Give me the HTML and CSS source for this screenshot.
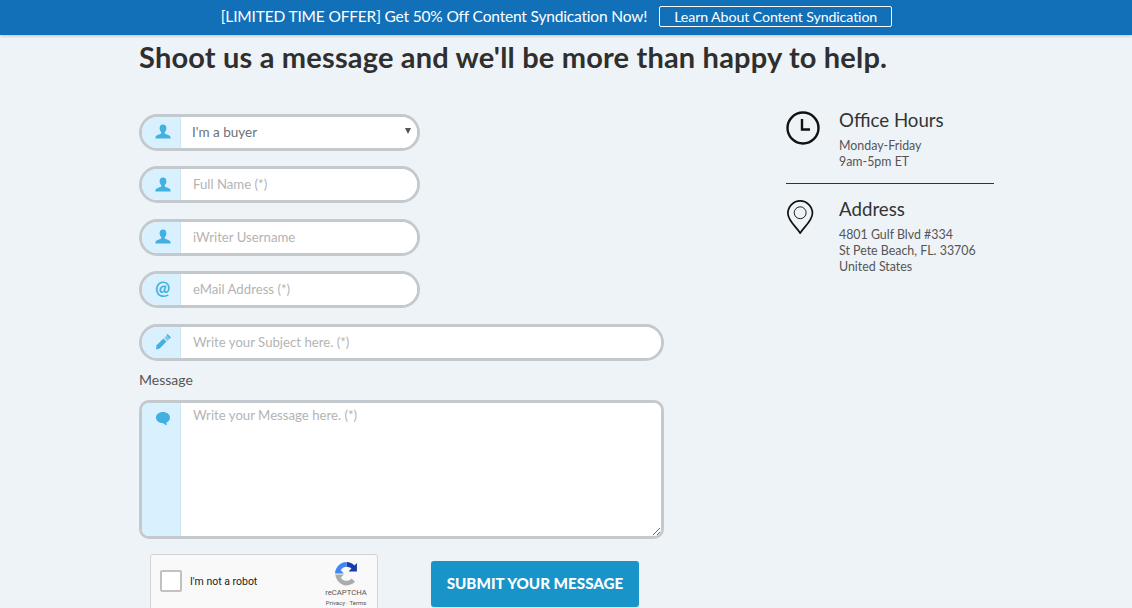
FILE: index.html
```html
<!DOCTYPE html>
<html lang="en">
<head>
<meta charset="utf-8">
<title>Contact</title>
<link rel="stylesheet" href="styles.css">
</head>
<body>
<header class="banner">
  <span class="banner-text">[LIMITED TIME OFFER] Get 50% Off Content Syndication Now!</span>
  <a class="banner-btn" href="#">Learn About Content Syndication</a>
</header>
<main class="page">
  <h1 class="title">Shoot us a message and we'll be more than happy to help.</h1>
  <div class="columns">
    <form class="form">
      <div class="field short has-caret">
        <span class="addon"><svg class="ico" viewBox="0 0 16 16"><path d="M8 0.5c2.2 0 3.4 1.6 3.4 3.8 0 1.6-.7 3-1.5 3.8-.3.4-.3 1.300.2 1.600 1.200.7 5 1.400 5.400 3.300.1.600.1 1.500.1 1.500H.4s0-.900.1-1.500c.4-1.900 4.200-2.600 5.400-3.300.5-.3.5-1.200.2-1.600-.8-.8-1.500-2.200-1.500-3.800C4.600 2.100 5.800.5 8 .5z"/></svg></span>
        <select class="control select"><option>I'm a buyer</option></select>
      </div>
      <div class="field short">
        <span class="addon"><svg class="ico" viewBox="0 0 16 16"><path d="M8 0.5c2.2 0 3.4 1.6 3.4 3.8 0 1.6-.7 3-1.5 3.8-.3.4-.3 1.300.2 1.600 1.200.7 5 1.400 5.400 3.300.1.600.1 1.500.1 1.500H.4s0-.900.1-1.500c.4-1.900 4.200-2.600 5.400-3.300.5-.3.5-1.200.2-1.600-.8-.8-1.500-2.200-1.500-3.800C4.600 2.100 5.800.5 8 .5z"/></svg></span>
        <input class="control" type="text" placeholder="Full Name (*)">
      </div>
      <div class="field short">
        <span class="addon"><svg class="ico" viewBox="0 0 16 16"><path d="M8 0.5c2.2 0 3.4 1.6 3.4 3.8 0 1.6-.7 3-1.5 3.8-.3.4-.3 1.300.2 1.600 1.200.7 5 1.400 5.400 3.300.1.600.1 1.500.1 1.500H.4s0-.900.1-1.500c.4-1.900 4.200-2.600 5.400-3.300.5-.3.5-1.200.2-1.600-.8-.8-1.500-2.200-1.500-3.800C4.600 2.100 5.800.5 8 .5z"/></svg></span>
        <input class="control" type="text" placeholder="iWriter Username">
      </div>
      <div class="field short">
        <span class="addon at">@</span>
        <input class="control" type="text" placeholder="eMail Address (*)">
      </div>
      <div class="field">
        <span class="addon"><svg class="ico" viewBox="0 0 16 16"><path d="M1 15.500l.6-4.200L8.400 4.500l3.100 3.100-6.800 6.800z"/><path d="M9.300 3.700l2.700-2.400 3 3-2.500 2.600z" opacity=".6"/><path d="M11.500 1l1-1 3.500 3.500-1 1z"/></svg></span>
        <input class="control" type="text" placeholder="Write your Subject here. (*)">
      </div>
      <label class="label">Message</label>
      <div class="field area">
        <span class="addon top"><svg class="ico chat" viewBox="0 0 16 16"><path d="M8 1c3.900 0 7 2.400 7 5.600 0 2.400-1.500 4.300-3.700 5.100.1 1.100.9 2.500.9 2.500s-2.700-.6-4.100-2C3.900 12.200 1 9.800 1 6.600 1 3.400 4.100 1 8 1z"/></svg></span>
        <textarea class="control textarea" placeholder="Write your Message here. (*)"></textarea>
      </div>
      <div class="actions">
        <div class="captcha">
          <span class="check"></span>
          <span class="robot">I'm not a robot</span>
          <div class="brand">
            <svg class="logo" viewBox="0 0 24 24">
              <path fill="#1c3aa9" d="M12 1c3 0 5.700 1.300 7.600 3.400L22 2v8h-8l2.700-2.800C15.700 6.200 14 5.500 12 5.500z"/>
              <path fill="#4285f4" d="M12 1v4.500c-2.400 0-4.400 1.300-5.500 3.300L9.500 12H1.200C1 11.700 1 11.300 1 11 2 5.400 6.500 1 12 1z"/>
              <path fill="#ababab" d="M1.200 13h8.300l-3 3c1.100 1.700 3.200 3 5.500 3 2 0 3.700-.9 4.900-2.300l3.300 3.300C18.300 22 15.300 23.500 12 23.500 6.500 23.500 2 19 1.200 13z"/>
            </svg>
            <span class="brand-name">reCAPTCHA</span>
            <span class="brand-links">Privacy · Terms</span>
          </div>
        </div>
        <button class="submit" type="button">SUBMIT YOUR MESSAGE</button>
      </div>
    </form>
    <aside class="info">
      <section class="info-block">
        <svg class="info-ico" viewBox="0 0 34 34" fill="none" stroke="#111" stroke-width="2.400"><circle cx="17" cy="17" r="15.500"/><path d="M16 8v10.500h8"/></svg>
        <div>
          <h2 class="info-title">Office Hours</h2>
          <p class="info-text">Monday-Friday<br>9am-5pm ET</p>
        </div>
      </section>
      <hr class="rule">
      <section class="info-block">
        <svg class="info-ico" viewBox="0 0 34 36" fill="none" stroke="#111" stroke-width="1.800"><path d="M14 35C10.500 29 1 22 1 14a13 13 0 0 1 26 0c0 8-9.500 15-13 21z"/><circle cx="14" cy="13.500" r="6.300" stroke-width="1"/></svg>
        <div>
          <h2 class="info-title">Address</h2>
          <p class="info-text">4801 Gulf Blvd #334<br>St Pete Beach, FL. 33706<br>United States</p>
        </div>
      </section>
    </aside>
  </div>
</main>
</body>
</html>
```
FILE: styles.css
```css
* { box-sizing: border-box; }
html, body { margin: 0; height: 608px; overflow: hidden; }
body { background: #eef3f7; font-family: "Lato", "Liberation Sans", sans-serif; color: #333; }

.banner {
  height: 35px;
  background: #1270b8;
  box-shadow: 0 1px 3px rgba(0,0,0,.2);
  display: flex;
  align-items: center;
  justify-content: center;
  padding: 0 19px 3px 0;
  color: #fff;
  font-size: 15.5px;
}
.banner-text { letter-spacing: -0.17px; }
.banner-btn {
  margin-left: 12px;
  width: 233px;
  height: 21px;
  border: 1px solid #fff;
  border-radius: 2px;
  color: #fff;
  text-decoration: none;
  font-size: 14.200px;
  letter-spacing: -0.1px;
  display: flex;
  align-items: center;
  justify-content: center;
}

.page { padding-left: 139px; }
.title {
  margin: 4px 0 0;
  height: 36px;
  font-size: 29px;
  line-height: 36px;
  font-weight: 700;
  letter-spacing: 0.18px;
  color: #2f2f2f;
  white-space: nowrap;
}
.columns { display: flex; margin-top: 38.750px; }
.form { width: 525px; display: flex; flex-direction: column; }
.info { width: 208px; margin-left: 122px; margin-top: -5.750px; }

.field {
  position: relative;
  display: flex;
  height: 37px;
  margin-bottom: 15.5px;
  border: 3px solid #c3c9cc;
  border-radius: 19px;
  background: #fff;
  overflow: hidden;
}
.field.short { width: 281px; }
.field.area { height: 139.500px; border-radius: 10px; margin-bottom: 14.500px; }
.has-caret::after {
  content: "";
  position: absolute;
  right: 6px;
  top: 11px;
  border-style: solid;
  border-width: 6px 3px 0;
  border-color: #555 transparent transparent;
}
.addon {
  width: 39px;
  flex: none;
  background: #d9f0fe;
  border-right: 1px solid #cfe6f3;
  display: flex;
  align-items: center;
  justify-content: center;
  padding-left: 3px;
  color: #42b0e0;
}
.addon.top { align-items: flex-start; padding-top: 8px; }
.at { font-size: 18px; padding-bottom: 3px; font-weight: 700; }
.ico { width: 16px; height: 16px; fill: #42b0e0; }

.control {
  flex: 1;
  min-width: 0;
  border: 0;
  outline: 0;
  background: #fff;
  padding: 0 0 1px 12px;
  font-family: inherit;
  font-size: 13.5px;
  color: #6b7278;
}
.control::placeholder { color: #b4b4b4; opacity: 1; font-size: 13.200px; }
.select { appearance: none; padding-left: 11px; }
.textarea { resize: vertical; padding-top: 4px; height: 100%; }

.label {
  font-size: 14px;
  line-height: 16px;
  color: #555;
  margin: -4px 0 11.500px;
}

.actions { display: flex; align-items: flex-start; }
.captcha {
  flex: none;
  margin-left: 11px;
  width: 228px;
  height: 74px;
  background: #f9f9f9;
  border: 1px solid #d3d3d3;
  border-radius: 3px;
  display: flex;
  align-items: flex-start;
  padding: 15px 0 0 9px;
  font-family: "Roboto", sans-serif;
}
.check {
  width: 22px;
  height: 22px;
  background: #fff;
  border: 2px solid #c1c1c1;
  border-radius: 2px;
  flex: none;
}
.robot { margin-left: 8px; font-size: 10.500px; line-height: 24px; color: #222; }
.brand {
  margin-left: auto;
  width: 62px;
  margin-top: -9px;
  display: flex;
  flex-direction: column;
  align-items: center;
  color: #555;
}
.logo { width: 25px; height: 25px; }
.brand-name { font-size: 7.700px; line-height: 11px; margin-top: 1px; }
.brand-links { font-size: 6px; line-height: 10px; }
.submit {
  margin: 7px 0 0 53px;
  width: 208px;
  height: 46px;
  background: #1894c8;
  border: 0;
  border-radius: 3px;
  color: #fff;
  padding: 0 0 1px;
  font-family: inherit;
  font-size: 15.200px;
  font-weight: 900;
}

.info-block { display: flex; }
.info-ico { width: 34px; height: 34px; flex: none; margin: 3px 19px 0 0; }
.info-title { margin: 0; font-size: 18.700px; line-height: 24px; font-weight: 400; color: #333; }
.info-text { margin: 6px 0 0; font-size: 12.400px; line-height: 16px; color: #555; }
.rule { margin: 13px 0; border: 0; border-top: 1px solid #333; }
```
